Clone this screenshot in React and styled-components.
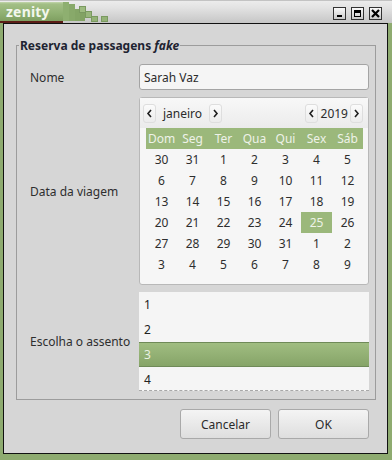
import React, { useState } from 'react';
import styled, { createGlobalStyle } from 'styled-components';

const GlobalStyle = createGlobalStyle`
  html, body {
    margin: 0;
    padding: 0;
    background: #d6d6d6;
  }
  body {
    font-family: 'Noto Sans', 'DejaVu Sans', sans-serif;
    font-size: 12px;
    color: #2e2e2e;
  }
`;

const Window = styled.div`
  width: 392px;
  height: 460px;
  display: flex;
  flex-direction: column;
  overflow: hidden;
`;

const TitleBar = styled.div`
  height: 23px;
  display: flex;
  align-items: flex-start;
  background: linear-gradient(#9a9a9a 0px, #ececec 1px, #e2e2e2 8px, #c6c6c6 23px);
`;

const TitleTab = styled.div`
  margin-top: 2px;
  width: 57px;
  height: 19px;
  padding-left: 6px;
  border-bottom: 2px solid #5b1d16;
  background: linear-gradient(#c3d6ad 0px, #a3bf86 2px, #8eaf70 12px, #7f9f61 19px);
  color: #f3f7ee;
  font-weight: 700;
  font-size: 14px;
  line-height: 19px;
  letter-spacing: 0.2px;
`;

const Stairs = styled.svg`
  display: block;
  flex: none;
`;

const TitleFill = styled.div`
  flex: 1;
`;

const WinButtons = styled.div`
  display: flex;
  gap: 5px;
  margin-top: 7px;
  margin-right: 10px;
`;

const WinButton = styled.div`
  width: 13px;
  height: 13px;
  box-sizing: border-box;
  border: 1px solid #333;
  background: linear-gradient(#fafafa, #c9c9c9);
  display: flex;
  align-items: center;
  justify-content: center;
`;

const FrameBody = styled.div`
  flex: 1;
  display: flex;
  border-left: 3px solid #8eab70;
  border-right: 4px solid #8eab70;
  border-bottom: 6px solid #8eab70;
`;

const Inner = styled.div`
  flex: 1;
  border: 1px solid #111;
  background: #d6d6d6;
  padding: 13px 11px 0 12px;
  display: flex;
  flex-direction: column;
`;

const Group = styled.div`
  display: flex;
  flex-direction: column;
`;

const GroupHead = styled.div`
  display: flex;
  height: 17px;
`;

const HeadEdge = styled.div`
  align-self: flex-end;
  height: 8px;
  border-top: 1px solid #9c9c9c;
  border-left: ${p => (p.$side === 'left' ? '1px solid #9c9c9c' : 'none')};
  border-right: ${p => (p.$side === 'right' ? '1px solid #9c9c9c' : 'none')};
  width: ${p => (p.$side === 'left' ? '2px' : 'auto')};
  flex: ${p => (p.$side === 'right' ? 1 : 'none')};
`;

const GroupTitle = styled.div`
  padding: 0 1px;
  font-weight: 700;
  font-size: 12px;
  line-height: 17px;
  color: #1e2432;

  em {
    font-style: italic;
  }
`;

const GroupBody = styled.div`
  border: 1px solid #9c9c9c;
  border-top: none;
  padding: 10px 6px 8px 13px;
`;

const FormGrid = styled.div`
  display: grid;
  grid-template-columns: 109px 230px;
  row-gap: 7px;
  align-items: center;
`;

const FieldLabel = styled.div`
  color: #2e2e2e;
  font-size: 12px;
`;

const Entry = styled.input`
  box-sizing: border-box;
  height: 26px;
  width: 230px;
  border: 1px solid #a4a4a4;
  border-radius: 3px;
  background: #f5f5f5;
  padding: 0 4px;
  font-family: inherit;
  font-size: 12px;
  color: #2b2b2b;
  outline: none;
`;

const CalendarBox = styled.div`
  box-sizing: border-box;
  height: 188px;
  border: 1px solid #b8b8b8;
  border-radius: 3px;
  background: #f6f6f6;
  padding: 0 5px 0 5px;
  display: flex;
  flex-direction: column;
`;

const CalHeader = styled.div`
  height: 30px;
  margin: 0 -5px;
  padding: 0 5px 0 3px;
  display: flex;
  align-items: center;
  background: linear-gradient(#f8f8f8, #ebebeb);
`;

const NavButton = styled.div`
  width: 13px;
  height: 19px;
  box-sizing: border-box;
  border: 1px solid #dedede;
  border-radius: 3px;
  background: linear-gradient(#fbfbfb, #ececec);
  display: flex;
  align-items: center;
  justify-content: center;
`;

const HeadText = styled.div`
  padding: ${p => p.$pad};
  color: #2b2b2b;
  font-size: 12px;
`;

const Spacer = styled.div`
  flex: 1;
`;

const DayGrid = styled.div`
  display: grid;
  grid-template-columns: repeat(7, 31px);
  grid-auto-rows: 21px;
  margin-left: 1px;
`;

const DayName = styled.div`
  background: #9bb87b;
  color: #eef2e8;
  display: flex;
  align-items: center;
  justify-content: center;
  font-size: 12px;
`;

const DayCell = styled.div`
  display: flex;
  align-items: center;
  justify-content: center;
  font-size: 12px;
  background: ${p => (p.$selected ? '#9bb87b' : 'transparent')};
  color: ${p => (p.$selected ? '#eef3e8' : '#2e2e2e')};
`;

const SeatList = styled.div`
  box-sizing: border-box;
  height: 99px;
  background: #f5f5f5;
  border-bottom: 1px dashed #a8a8a8;
  overflow: hidden;
`;

const SeatItem = styled.div`
  box-sizing: border-box;
  height: 25px;
  padding-left: 5px;
  display: flex;
  align-items: center;
  font-size: 12px;
  color: ${p => (p.$selected ? '#eaf1e2' : '#222')};
  background: ${p => (p.$selected ? 'linear-gradient(#a0bd81, #86a468)' : 'transparent')};
  border-top: 1px solid ${p => (p.$selected ? '#6f8a58' : 'transparent')};
  border-bottom: 1px solid ${p => (p.$selected ? '#6f8a58' : 'transparent')};
`;

const ButtonRow = styled.div`
  display: flex;
  justify-content: flex-end;
  gap: 7px;
  margin-top: 9px;
  margin-right: 7px;
`;

const DialogButton = styled.button`
  width: 91px;
  height: 30px;
  border: 1px solid #a9a9a9;
  border-radius: 3px;
  background: linear-gradient(#f4f4f4, #dedede);
  font-family: inherit;
  font-size: 12px;
  color: #2b2b2b;
  padding: 0;
`;

const days = [
  30, 31, 1, 2, 3, 4, 5,
  6, 7, 8, 9, 10, 11, 12,
  13, 14, 15, 16, 17, 18, 19,
  20, 21, 22, 23, 24, 25, 26,
  27, 28, 29, 30, 31, 1, 2,
  3, 4, 5, 6, 7, 8, 9,
];

const dayNames = ['Dom', 'Seg', 'Ter', 'Qua', 'Qui', 'Sex', 'Sáb'];

const Chevron = ({ dir }) => (
  <svg width="7" height="9" viewBox="0 0 7 9">
    <path
      d={dir === 'left' ? 'M5 1 L2 4.5 L5 8' : 'M2 1 L5 4.5 L2 8'}
      fill="none"
      stroke="#1e1e1e"
      strokeWidth="1.6"
    />
  </svg>
);

const TabStairs = () => (
  <Stairs width="48" height="23" viewBox="0 0 48 23">
    <rect x="0" y="2" width="6" height="19" fill="#8eaf70" />
    <rect x="6" y="4" width="6" height="17" fill="#88a96a" />
    <rect x="12" y="9" width="5" height="12" fill="#84a566" />
    <rect x="17" y="13" width="5" height="8" fill="#82a264" />
    <rect x="16.5" y="6.5" width="6" height="6" fill="#9dbb80" stroke="#7a9960" />
    <rect x="22.5" y="11.5" width="6" height="6" fill="#98b67b" stroke="#7a9960" />
    <rect x="28.5" y="16.5" width="6" height="5" fill="#94b277" stroke="#7a9960" />
    <rect x="38.5" y="16.5" width="6" height="5" fill="#94b277" stroke="#7a9960" />
  </Stairs>
);

const Calendar = () => (
  <CalendarBox>
    <CalHeader>
      <NavButton><Chevron dir="left" /></NavButton>
      <HeadText $pad="0 7px 0 7px">janeiro</HeadText>
      <NavButton><Chevron dir="right" /></NavButton>
      <Spacer />
      <NavButton><Chevron dir="left" /></NavButton>
      <HeadText $pad="0 2px 0 3px">2019</HeadText>
      <NavButton><Chevron dir="right" /></NavButton>
    </CalHeader>
    <DayGrid>
      {dayNames.map(d => (
        <DayName key={d}>{d}</DayName>
      ))}
      {days.map((d, i) => (
        <DayCell key={i} $selected={i === 26}>{d}</DayCell>
      ))}
    </DayGrid>
  </CalendarBox>
);

export default function App() {
  const [name, setName] = useState('Sarah Vaz');
  const seat = 3;

  return (
    <Window>
      <GlobalStyle />
      <TitleBar>
        <TitleTab>zenity</TitleTab>
        <TabStairs />
        <TitleFill />
        <WinButtons>
          <WinButton>
            <svg width="11" height="11" viewBox="0 0 11 11">
              <rect x="3" y="7" width="5" height="2" fill="#000" />
            </svg>
          </WinButton>
          <WinButton>
            <svg width="11" height="11" viewBox="0 0 11 11">
              <rect x="2.5" y="2.5" width="6" height="6" fill="none" stroke="#000" />
              <rect x="2" y="2" width="7" height="3" fill="#000" />
            </svg>
          </WinButton>
          <WinButton>
            <svg width="11" height="11" viewBox="0 0 11 11">
              <path d="M2 2 L9 9 M9 2 L2 9" stroke="#000" strokeWidth="2.2" />
            </svg>
          </WinButton>
        </WinButtons>
      </TitleBar>
      <FrameBody>
        <Inner>
          <Group>
            <GroupHead>
              <HeadEdge $side="left" />
              <GroupTitle>
                Reserva de passagens <em>fake</em>
              </GroupTitle>
              <HeadEdge $side="right" />
            </GroupHead>
            <GroupBody>
              <FormGrid>
                <FieldLabel>Nome</FieldLabel>
                <Entry value={name} onChange={e => setName(e.target.value)} />
                <FieldLabel>Data da viagem</FieldLabel>
                <Calendar />
                <FieldLabel>Escolha o assento</FieldLabel>
                <SeatList>
                  {[1, 2, 3, 4].map(n => (
                    <SeatItem key={n} $selected={n === seat}>{n}</SeatItem>
                  ))}
                </SeatList>
              </FormGrid>
            </GroupBody>
          </Group>
          <ButtonRow>
            <DialogButton>Cancelar</DialogButton>
            <DialogButton>OK</DialogButton>
          </ButtonRow>
        </Inner>
      </FrameBody>
    </Window>
  );
}
